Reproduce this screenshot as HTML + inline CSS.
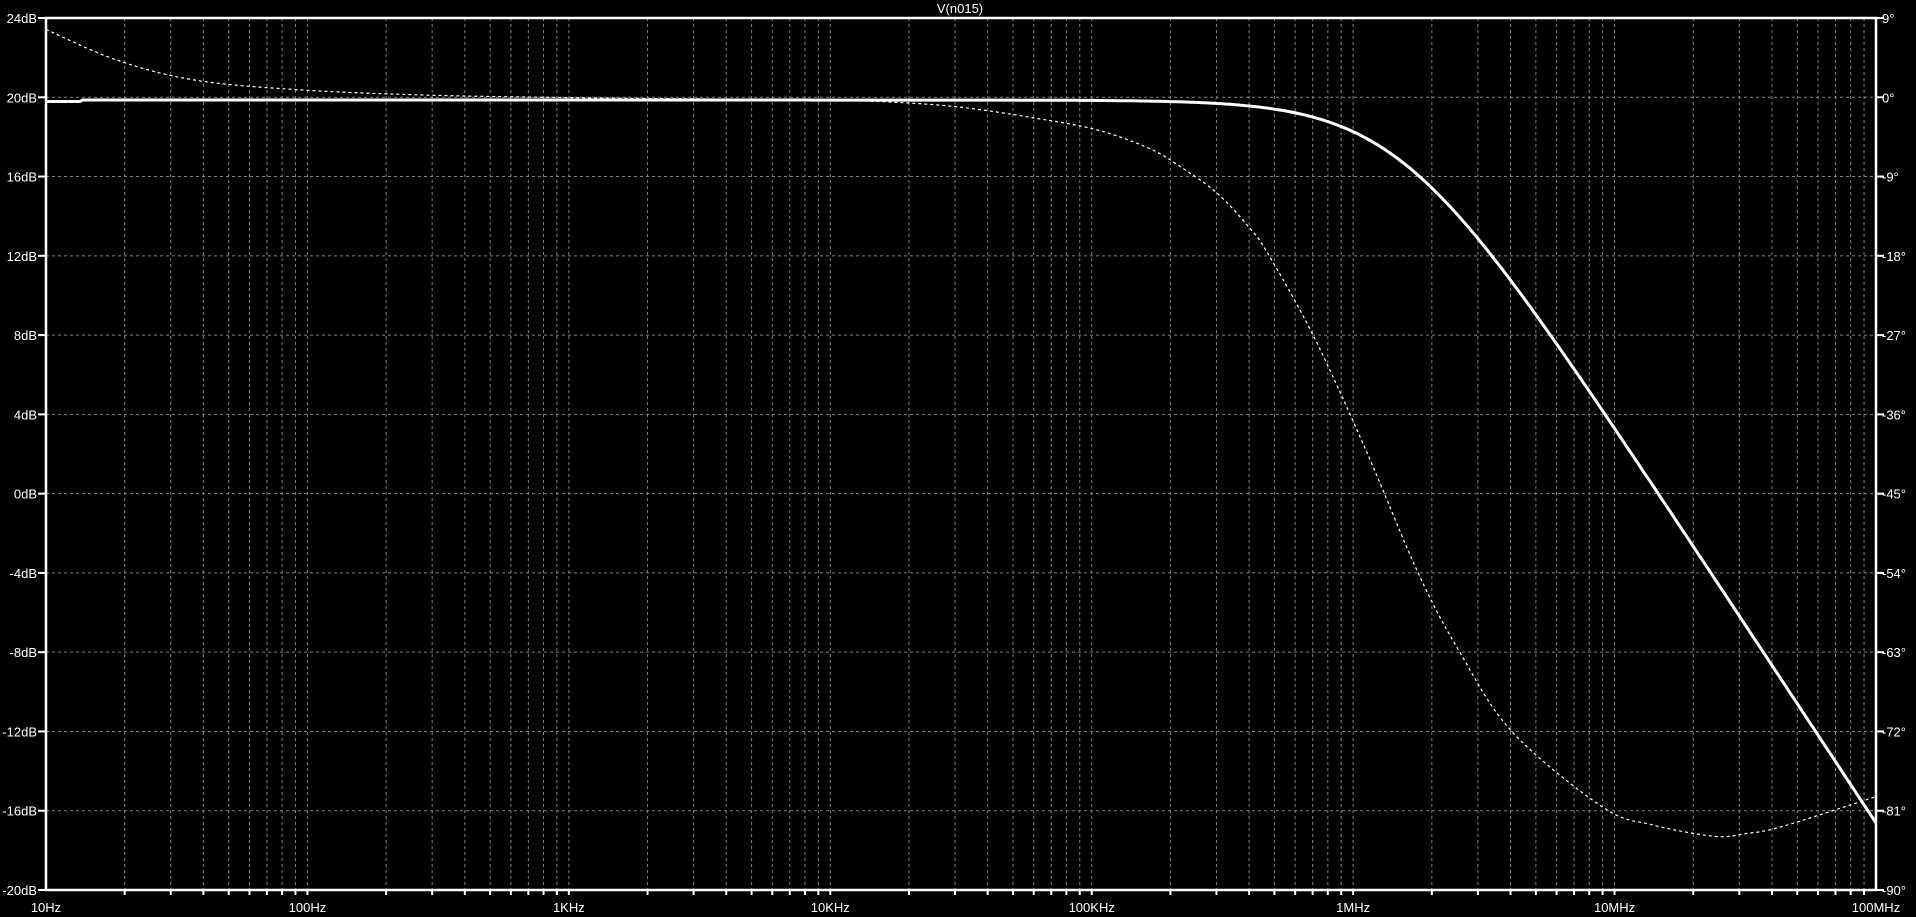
<!DOCTYPE html>
<html><head><meta charset="utf-8"><style>
html,body{margin:0;padding:0;background:#000;width:1916px;height:917px;overflow:hidden}
svg{display:block}
text{font-family:"Liberation Sans",sans-serif;font-size:13px;fill:#fff}
</style></head><body>
<svg id="s" width="1916" height="917" xmlns="http://www.w3.org/2000/svg"></svg>
<script>
const L=46,R=1876,T=18,B=890,DEC=(R-L)/7,DIV=(B-T)/11;
const X=lg=>L+(lg-1)*DEC;
let h='';
for(let d=0;d<7;d++)for(let m=1;m<=9;m++){
  if(d==0&&m==1)continue;
  const x=X(1+d+Math.log10(m));
  h+=`<line x1="${x}" y1="${T}" x2="${x}" y2="${B}" stroke="#808080" stroke-dasharray="3,3"/>`;
  h+=`<line x1="${x}" y1="${B}" x2="${x}" y2="${B+5}" stroke="#fff" stroke-width="2"/>`;
}
for(let k=1;k<11;k++){const y=T+k*DIV;
  h+=`<line x1="${L}" y1="${y}" x2="${R}" y2="${y}" stroke="#808080" stroke-dasharray="3,3"/>`;}
for(let k=0;k<=11;k++){const y=T+k*DIV;
  h+=`<line x1="38" y1="${y}" x2="${L}" y2="${y}" stroke="#fff" stroke-width="2"/>`;
  h+=`<line x1="${R}" y1="${y}" x2="1884" y2="${y}" stroke="#fff" stroke-width="2"/>`;
  h+=`<text x="37" y="${y+5}" text-anchor="end">${24-4*k}dB</text>`;
  h+=`<text x="1882" y="${y+5}">${9-9*k}°</text>`;}
const fl=['10Hz','100Hz','1KHz','10KHz','100KHz','1MHz','10MHz','100MHz'];
fl.forEach((t,i)=>{h+=`<text x="${X(1+i)}" y="912" text-anchor="middle">${t}</text>`;});
h+=`<text x="960" y="13" text-anchor="middle">V(n015)</text>`;
let mp=[];
for(let lg=1;lg<=8.0001;lg+=0.01){const f=Math.pow(10,lg);
  let db=19.86-10*Math.log10(1+Math.pow(f/1.5e6,2));
  let y=T+(24-db)/4*DIV; if(lg<1.14)y+=1.5;
  mp.push([X(lg).toFixed(1),y.toFixed(1)]);}
h+=`<polyline points="${mp.map(p=>p.join(',')).join(' ')}" fill="none" stroke="#fff" stroke-width="3"/>`;
const pts=[[1,7.7],[1.27,4.23],[1.56,2.0],[1.94,0.9],[2.44,0.26],[3.03,-0.05],[3.9,-0.3],[4.2,-0.5],[4.49,-1.1],[4.78,-2.35],[5.02,-3.7],[5.22,-5.8],[5.34,-7.9],[5.48,-10.9],[5.6,-14.7],[5.673,-17.7],[5.85,-27.2],[6.048,-40],[6.25,-54.1],[6.41,-63.1],[6.61,-72.1],[6.955,-80.6],[7.144,-82.6],[7.38,-83.9],[7.5,-83.6],[7.64,-82.8],[8,-79.4]];
const P=pts.map(p=>[X(p[0]),T+(9-p[1])/9*DIV]);
let d=`M${P[0][0]},${P[0][1]}`;
for(let i=0;i<P.length-1;i++){const p0=P[Math.max(0,i-1)],p1=P[i],p2=P[i+1],p3=P[Math.min(P.length-1,i+2)];
  const c1=[p1[0]+(p2[0]-p0[0])/6,p1[1]+(p2[1]-p0[1])/6],c2=[p2[0]-(p3[0]-p1[0])/6,p2[1]-(p3[1]-p1[1])/6];
  d+=` C${c1[0]},${c1[1]} ${c2[0]},${c2[1]} ${p2[0]},${p2[1]}`;}
h+=`<path d="${d}" fill="none" stroke="#fff" stroke-width="1.2" stroke-dasharray="3,3"/>`;
h+=`<rect x="${L}" y="${T}" width="${R-L}" height="${B-T}" fill="none" stroke="#fff" stroke-width="2.5"/>`;
document.getElementById('s').innerHTML=h;
</script>
</body></html>
